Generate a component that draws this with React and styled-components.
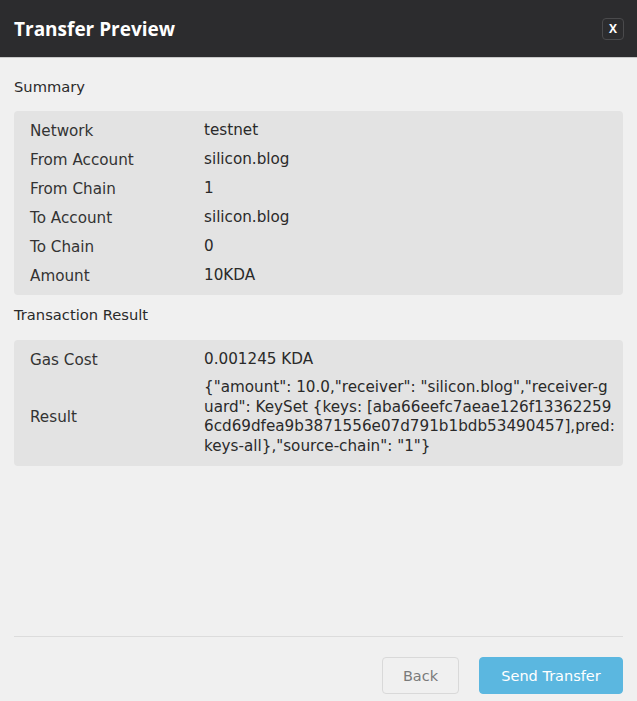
import React from 'react'
import styled, { createGlobalStyle } from 'styled-components'

const GlobalStyle = createGlobalStyle`
  html, body {
    margin: 0;
    padding: 0;
    background: #f0f0f0;
    font-family: "DejaVu Sans", "Noto Sans", sans-serif;
  }
`

const Modal = styled.div`
  display: flex;
  flex-direction: column;
  height: 701px;
  background: #f0f0f0;
  color: #2a2a2a;
`

const Header = styled.header`
  display: flex;
  align-items: center;
  justify-content: space-between;
  height: 58px;
  padding: 0 13px 0 14px;
  background: #2c2c2e;
  border-bottom: 1px solid #c8c8c8;
  box-sizing: border-box;
`

const Title = styled.h2`
  margin: 0;
  font-family: "Open Sans", sans-serif;
  font-size: 19px;
  font-weight: 700;
  color: #ffffff;
`

const CloseButton = styled.button`
  width: 22px;
  height: 22px;
  padding: 0;
  border: 1px solid #4a4a4c;
  border-radius: 4px;
  background: transparent;
  color: #ffffff;
  font-family: "Open Sans", sans-serif;
  font-size: 12px;
  font-weight: 700;
  cursor: pointer;
`

const Body = styled.div`
  flex: 1;
  display: flex;
  flex-direction: column;
  padding: 0 14px;
`

const SectionTitle = styled.div`
  font-size: 14.7px;
  padding: ${p => p.$first ? '20px 0 16px' : '11px 0 17px'};
`

const Card = styled.div`
  display: grid;
  grid-template-columns: 174px 1fr;
  padding: 5px 8px 5px 16px;
  background: #e3e3e3;
  border-radius: 4px;
  font-size: 15.2px;
`

const Label = styled.div`
  display: flex;
  align-items: center;
  min-height: 29px;
  color: #333;
`

const Value = styled.div`
  display: flex;
  align-items: center;
  min-height: 29px;
  padding: ${p => p.$long ? '4px 0' : '0'};
  color: #2a2a2a;
  line-height: 19.7px;
  word-break: break-all;
`

const Footer = styled.div`
  margin-top: auto;
  display: flex;
  justify-content: flex-end;
  gap: 20px;
  padding: 20px 0 7px;
  border-top: 1px solid #dcdcdc;
`

const Button = styled.button`
  height: 37px;
  width: ${p => p.$primary ? '144px' : '77px'};
  padding: 0;
  border-radius: 4px;
  border: 1px solid ${p => p.$primary ? '#5bb7e0' : '#d9d9d9'};
  background: ${p => p.$primary ? '#5bb7e0' : 'transparent'};
  color: ${p => p.$primary ? '#ffffff' : '#7a7a7a'};
  font-family: inherit;
  font-size: 14.5px;
  cursor: pointer;
`

const summary = [
  ['Network', 'testnet'],
  ['From Account', 'silicon.blog'],
  ['From Chain', '1'],
  ['To Account', 'silicon.blog'],
  ['To Chain', '0'],
  ['Amount', '10KDA'],
]

const result = [
  ['Gas Cost', '0.001245 KDA'],
  ['Result', '{"amount": 10.0,"receiver": "silicon.blog","receiver-guard": KeySet {keys: [aba66eefc7aeae126f133622596cd69dfea9b3871556e07d791b1bdb53490457],pred: keys-all},"source-chain": "1"}'],
]

const Rows = ({ rows }) => rows.map(([k, v]) => (
  <React.Fragment key={k}>
    <Label>{k}</Label>
    <Value $long={v.length > 40}>{v}</Value>
  </React.Fragment>
))

const App = () => (
  <>
    <GlobalStyle />
    <Modal>
      <Header>
        <Title>Transfer Preview</Title>
        <CloseButton>X</CloseButton>
      </Header>
      <Body>
        <SectionTitle $first>Summary</SectionTitle>
        <Card><Rows rows={summary} /></Card>
        <SectionTitle>Transaction Result</SectionTitle>
        <Card><Rows rows={result} /></Card>
        <Footer>
          <Button>Back</Button>
          <Button $primary>Send Transfer</Button>
        </Footer>
      </Body>
    </Modal>
  </>
)

export default App
